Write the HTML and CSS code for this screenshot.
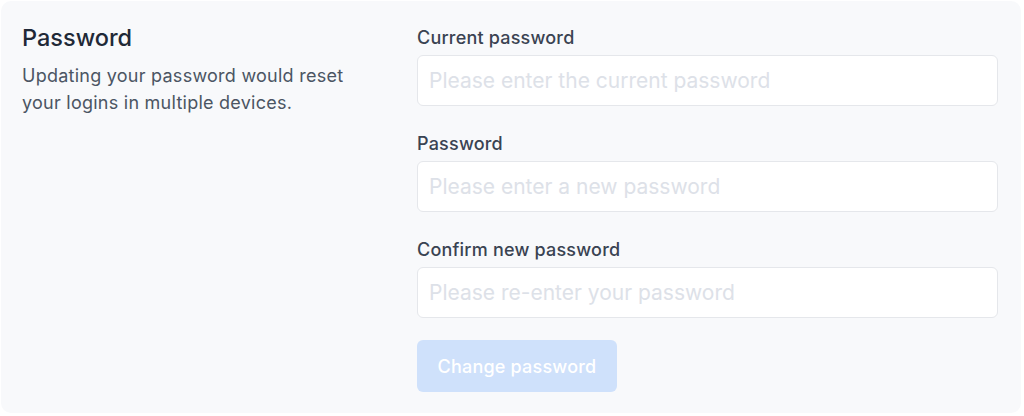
FILE: index.html
```html
<!DOCTYPE html>
<html lang="en">
<head>
    <meta charset="UTF-8">
    <meta name="viewport" content="width=device-width, initial-scale=1.0">
    <title>Password settings</title>
    <link rel="stylesheet" href="styles.css">
</head>
<body>
    <div class="settings-card">
        <div class="intro">
            <h2>Password</h2>
            <p>Updating your password would reset your logins in multiple devices.</p>
        </div>
        <form class="password-form">
            <div class="field">
                <label for="currentPassword">Current password</label>
                <input type="password" id="currentPassword" placeholder="Please enter the current password">
            </div>
            <div class="field">
                <label for="newPassword">Password</label>
                <input type="password" id="newPassword" placeholder="Please enter a new password">
            </div>
            <div class="field">
                <label for="confirmPassword">Confirm new password</label>
                <input type="password" id="confirmPassword" placeholder="Please re-enter your password">
            </div>
            <button type="button" class="change-button" disabled>Change password</button>
        </form>
    </div>
</body>
</html>
```

FILE: styles.css
```css
body, html {
    margin: 0;
    font-family: Inter, "Noto Sans", sans-serif;
    background-color: #ffffff;
}
body {
    padding: 1px 3px 0 1px;
}
.settings-card {
    display: flex;
    gap: 40px;
    background-color: #f8f9fb;
    border-radius: 10px;
    padding: 21px 23px 21px 21px;
}
.intro {
    width: 355px;
    flex-shrink: 0;
}
.intro h2 {
    margin: 0;
    font-size: 23.5px;
    font-weight: 500;
    line-height: 32px;
    color: #1f2937;
}
.intro p {
    margin: 8px 0 0;
    font-size: 18px;
    line-height: 27px;
    letter-spacing: 0.25px;
    color: #4b5563;
}
.password-form {
    flex: 1;
    display: flex;
    flex-direction: column;
    padding-top: 6px;
}
.field {
    display: flex;
    flex-direction: column;
    gap: 7px;
    margin-bottom: 28px;
}
.field:last-of-type {
    margin-bottom: 22px;
}
label {
    font-size: 18px;
    font-weight: 500;
    line-height: 20px;
    letter-spacing: 0.2px;
    color: #3a4352;
}
input[type="password"] {
    box-sizing: border-box;
    height: 51px;
    padding: 0 11px;
    font-family: inherit;
    font-size: 21px;
    border: 1px solid #e5e7eb;
    border-radius: 6px;
    background-color: #ffffff;
    outline: none;
}
input::placeholder {
    color: #dde1e8;
}
.change-button {
    align-self: flex-start;
    width: 200px;
    height: 52px;
    border: none;
    border-radius: 6px;
    background-color: #cfe1fb;
    color: #ffffff;
    font-family: inherit;
    font-size: 18px;
    font-weight: 500;
    letter-spacing: 0.2px;
}
```
